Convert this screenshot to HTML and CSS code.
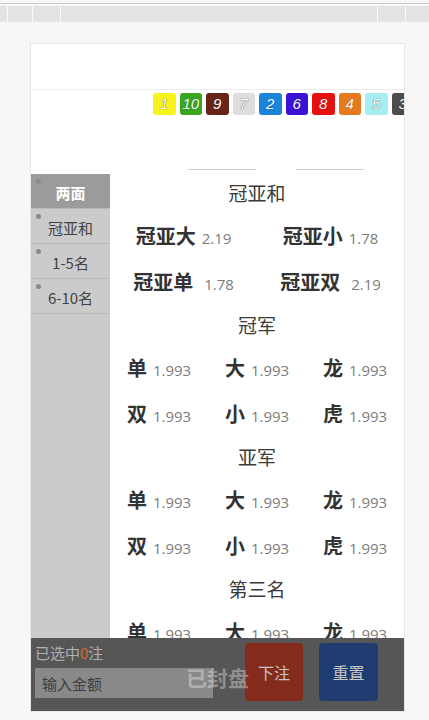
FILE: index.html
```html
<!DOCTYPE html>
<html lang="zh-CN">
<head>
<meta charset="utf-8">
<title>两面</title>
<link rel="stylesheet" href="styles.css">
</head>
<body>
<div class="topbar">
  <div class="topline"></div>
  <div class="tabs">
    <span class="tab t1"></span><span class="tab t2"></span><span class="tab t3"></span><span class="tab t4"></span><span class="tab t5"></span><span class="tab t6"></span>
  </div>
</div>
<div class="card">
  <div class="blank"></div>
  <div class="balls">
    <span class="ball c1">1</span>
    <span class="ball c10">10</span>
    <span class="ball c9">9</span>
    <span class="ball c7">7</span>
    <span class="ball c2">2</span>
    <span class="ball c6">6</span>
    <span class="ball c8">8</span>
    <span class="ball c4">4</span>
    <span class="ball c5">5</span>
    <span class="ball c3">3</span>
  </div>
  <div class="unders"><span class="under"></span><span class="under"></span></div>
  <div class="main">
    <div class="side">
      <div class="item active"><i class="dot"></i>两面</div>
      <div class="item"><i class="dot"></i>冠亚和</div>
      <div class="item"><i class="dot"></i>1-5名</div>
      <div class="item"><i class="dot"></i>6-10名</div>
    </div>
    <div class="content">
      <div class="section">
        <div class="heading">冠亚和</div>
        <div class="row two">
          <div class="cell"><b class="name">冠亚大</b><span class="odds">2.19</span></div>
          <div class="cell"><b class="name">冠亚小</b><span class="odds">1.78</span></div>
        </div>
        <div class="row two">
          <div class="cell"><b class="name">冠亚单</b><span class="odds wide">1.78</span></div>
          <div class="cell"><b class="name">冠亚双</b><span class="odds wide">2.19</span></div>
        </div>
      </div>
      <div class="section">
        <div class="heading">冠军</div>
        <div class="row three">
          <div class="cell"><b class="name">单</b><span class="odds">1.993</span></div>
          <div class="cell"><b class="name">大</b><span class="odds">1.993</span></div>
          <div class="cell"><b class="name">龙</b><span class="odds">1.993</span></div>
        </div>
        <div class="row three">
          <div class="cell"><b class="name">双</b><span class="odds">1.993</span></div>
          <div class="cell"><b class="name">小</b><span class="odds">1.993</span></div>
          <div class="cell"><b class="name">虎</b><span class="odds">1.993</span></div>
        </div>
      </div>
      <div class="section">
        <div class="heading">亚军</div>
        <div class="row three">
          <div class="cell"><b class="name">单</b><span class="odds">1.993</span></div>
          <div class="cell"><b class="name">大</b><span class="odds">1.993</span></div>
          <div class="cell"><b class="name">龙</b><span class="odds">1.993</span></div>
        </div>
        <div class="row three">
          <div class="cell"><b class="name">双</b><span class="odds">1.993</span></div>
          <div class="cell"><b class="name">小</b><span class="odds">1.993</span></div>
          <div class="cell"><b class="name">虎</b><span class="odds">1.993</span></div>
        </div>
      </div>
      <div class="section">
        <div class="heading">第三名</div>
        <div class="row three">
          <div class="cell"><b class="name">单</b><span class="odds">1.993</span></div>
          <div class="cell"><b class="name">大</b><span class="odds">1.993</span></div>
          <div class="cell"><b class="name">龙</b><span class="odds">1.993</span></div>
        </div>
        <div class="row three">
          <div class="cell"><b class="name">双</b><span class="odds">1.993</span></div>
          <div class="cell"><b class="name">小</b><span class="odds">1.993</span></div>
          <div class="cell"><b class="name">虎</b><span class="odds">1.993</span></div>
        </div>
      </div>
    </div>
  </div>
  <div class="footer">
    <div class="left">
      <div class="count">已选中<span class="num">0</span>注</div>
      <input class="amount" type="text" placeholder="输入金额">
    </div>
    <button class="btn bet">下注</button>
    <button class="btn reset">重置</button>
    <div class="closed">已封盘</div>
  </div>
</div>
</body>
</html>
```
FILE: styles.css
```css
* { box-sizing: border-box; }
html, body { margin: 0; padding: 0; }
body {
  background: #f7f7f7;
  font-family: "Open Sans", "Noto Sans CJK SC", sans-serif;
  width: 429px;
  height: 720px;
  overflow: hidden;
}
.topbar { padding-top: 3px; }
.topline { height: 1px; background: #cacaca; }
.tabs {
  margin-top: 2px;
  height: 16px;
  display: flex;
}
.tab { background: #e3e3e3; height: 16px; border-left: 1px solid #fafafa; }
.t1 { width: 7px; border-left: 0; }
.t2 { width: 25px; }
.t3 { width: 28px; }
.t4 { width: 317px; }
.t5 { width: 28px; }
.t6 { flex: 1; }

.card {
  margin: 21px 0 0 30px;
  width: 375px;
  height: 669px;
  background: #fff;
  border: 1px solid #e6e6e6;
  display: flex;
  flex-direction: column;
}
.blank { height: 46px; border-bottom: 1px solid #ececec; margin-left: 2px; flex: none; }
.balls {
  flex: none;
  margin-top: 3px;
  height: 22px;
  padding-left: 122px;
  display: flex;
  gap: 4px;
  overflow: hidden;
}
.ball {
  flex: none;
  width: 22.5px;
  height: 22px;
  border-radius: 3px;
  color: #fff;
  font-family: "Liberation Sans", sans-serif;
  font-style: italic;
  font-size: 15px;
  line-height: 22px;
  text-align: center;
  text-shadow: 0 0 1px rgba(0,0,0,0.45);
}
.c1 { background: #f9f31c; text-shadow: 0 0 1px #7a6a00, 0 0 1px #7a6a00; }
.c10 { background: #38a71f; }
.c9 { background: #6a2416; }
.c7 { background: #dddddd; text-shadow: 0 0 1px #666, 0 0 1px #666; }
.c2 { background: #1a84dd; }
.c6 { background: #3a12d3; }
.c8 { background: #e51010; }
.c4 { background: #e47a1c; }
.c5 { background: #a6eef1; text-shadow: 0 0 1px #666, 0 0 1px #666; }
.c3 { background: #4c4c4c; }

.unders {
  flex: none;
  margin-top: 54px;
  padding-left: 157px;
  display: flex;
  gap: 40px;
  height: 1px;
}
.under { width: 68px; height: 1px; background: #cfcfcf; }

.main {
  margin-top: 4px;
  flex: 1;
  display: flex;
  overflow: hidden;
  min-height: 0;
}
.side {
  width: 79px;
  flex: none;
  background: #cbcbcb;
}
.item {
  position: relative;
  height: 35px;
  border-bottom: 1px solid #b9b9b9;
  font-family: "Noto Sans CJK SC", sans-serif;
  font-size: 15px;
  color: #444;
  display: flex;
  align-items: center;
  justify-content: center;
  padding-top: 3px;
}
.item.active {
  background: #9b9b9b;
  color: #fff;
  font-weight: bold;
}
.dot {
  position: absolute;
  left: 5px;
  top: 5px;
  width: 5px;
  height: 5px;
  border-radius: 50%;
  background: #8a8a8a;
}
.content { flex: 1; }
.heading {
  height: 40px;
  display: flex;
  align-items: center;
  justify-content: center;
  padding-bottom: 3px;
  font-family: "Noto Sans CJK SC", sans-serif;
  font-size: 19px;
  color: #3a3a3a;
}
.row {
  height: 46px;
  display: grid;
}
.row.two { grid-template-columns: 1fr 1fr; }
.row.three { grid-template-columns: 1fr 1fr 1fr; }
.cell {
  display: flex;
  align-items: baseline;
  justify-content: center;
  padding-top: 7px;
}
.name {
  font-family: "Noto Sans CJK SC", sans-serif;
  font-weight: bold;
  font-size: 20px;
  color: #333;
}
.odds {
  margin-left: 6px;
  font-size: 15px;
  color: #7c7c7c;
}
.odds.wide { margin-left: 11px; }

.footer {
  flex: none;
  position: relative;
  height: 73px;
  background: #565656;
  display: flex;
  align-items: flex-start;
  padding: 4px 0 0 4px;
}
.left { width: 178px; display: flex; flex-direction: column; }
.count {
  height: 22px;
  line-height: 22px;
  font-family: "Noto Sans CJK SC", sans-serif;
  font-size: 15px;
  color: #b0b0b0;
}
.num { color: #d7662a; }
.amount {
  margin-top: 4px;
  height: 30px;
  width: 178px;
  border: 0;
  background: #898989;
  padding: 0 0 0 7px;
  font-family: "Noto Sans CJK SC", sans-serif;
  font-size: 15px;
  outline: none;
}
.amount::placeholder { color: #3e3e3e; }
.btn {
  border: 0;
  border-radius: 4px;
  height: 58px;
  margin-top: 1px;
  font-family: "Noto Sans CJK SC", sans-serif;
  font-size: 16px;
  color: #c6c6c6;
  padding: 0;
}
.bet { width: 58px; margin-left: 32px; background: #842b1b; }
.reset { width: 59px; margin-left: 16px; background: #1f3c70; }
.closed {
  position: absolute;
  left: 155px;
  top: 24px;
  font-family: "Noto Sans CJK SC", sans-serif;
  font-weight: bold;
  font-size: 21px;
  color: rgba(255,255,255,0.35);
  pointer-events: none;
}
```
